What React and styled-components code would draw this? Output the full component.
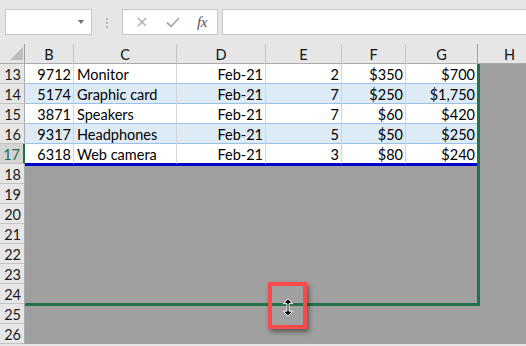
import React from "react";
import styled, { createGlobalStyle, css } from "styled-components";

const COLS = "25px 49px 103px 89px 76px 64px 72px 64px";

const GlobalStyle = createGlobalStyle`
  html, body { margin: 0; padding: 0; background: #e6e6e6; overflow: hidden; }
  body { font-family: Lato, "Liberation Sans", sans-serif; }
  #root { width: 526px; height: 346px; }
`;

const Page = styled.div`
  position: relative;
  width: 526px;
  height: 346px;
  overflow: hidden;
  background: #e6e6e6;
`;

const Toolbar = styled.div`
  display: flex;
  align-items: flex-start;
  box-sizing: border-box;
  height: 44px;
  padding: 9px 0 0 5px;
`;

const NameBox = styled.div`
  box-sizing: border-box;
  width: 87px;
  height: 26px;
  background: #fff;
  border: 1px solid #c6c6c6;
  display: flex;
  align-items: center;
  justify-content: flex-end;
  padding-right: 7px;
`;

const DropArrow = styled.span`
  width: 0;
  height: 0;
  border-left: 3.5px solid transparent;
  border-right: 3.5px solid transparent;
  border-top: 4px solid #6e6e6e;
`;

const Grip = styled.div`
  width: 30px;
  height: 26px;
  display: flex;
  flex-direction: column;
  align-items: center;
  justify-content: center;
  gap: 2px;
  padding-top: 1px;
  box-sizing: border-box;
`;

const GripDot = styled.span`
  width: 2px;
  height: 2px;
  background: #b6b6b6;
`;

const FxBox = styled.div`
  box-sizing: border-box;
  width: 96px;
  height: 26px;
  background: #fff;
  border: 1px solid #c6c6c6;
  display: flex;
  align-items: center;
  padding-left: 14px;
`;

const FxButton = styled.span`
  display: flex;
  align-items: center;
  justify-content: center;
  width: ${(p) => p.$w}px;
`;

const FxLabel = styled.span`
  font-family: "Liberation Serif", "DejaVu Serif", serif;
  font-style: italic;
  font-size: 15px;
  color: #555;
  letter-spacing: -0.5px;
  margin-left: -2px;
`;

const FormulaInput = styled.div`
  box-sizing: border-box;
  flex: 1;
  height: 26px;
  margin-left: 4px;
  margin-right: -4px;
  background: #fff;
  border: 1px solid #c6c6c6;
`;

const Grid = styled.div`
  display: grid;
  grid-template-columns: ${COLS};
  width: 542px;
`;

const HeaderRow = styled(Grid)`
  height: 20px;
  background: #e6e6e6;
`;

const ColHead = styled.div`
  box-sizing: border-box;
  height: 20px;
  border-bottom: 1px solid #ababab;
  border-right: 1px solid ${(p) => (p.$strong ? "#9e9e9e" : "#c4c4c4")};
  display: flex;
  align-items: center;
  justify-content: center;
  font-size: 14.5px;
  color: #111;
  padding-top: 1px;
`;

const Corner = styled(ColHead)`
  justify-content: flex-start;
  align-items: flex-end;
  padding: 0 0 2px 10px;
`;

const Row = styled(Grid)`
  height: 20px;
`;

const RowHead = styled.div`
  box-sizing: border-box;
  height: 20px;
  display: flex;
  align-items: center;
  justify-content: flex-end;
  padding: 1px 3px 0 0;
  font-size: 14.5px;
  background: ${(p) => (p.$active ? "#d3d3d3" : "#e6e6e6")};
  color: ${(p) => (p.$active ? "#1e6b44" : "#1a1a1a")};
  border-bottom: 1px solid #c3c3c3;
  border-right: ${(p) => (p.$active ? "2px solid #217346" : "1px solid #ababab")};
`;

const Cell = styled.div`
  box-sizing: border-box;
  height: 20px;
  display: flex;
  align-items: center;
  justify-content: ${(p) => (p.$left ? "flex-start" : "flex-end")};
  padding: 1px ${(p) => (p.$left ? "0" : "2px")} 0 ${(p) => (p.$left ? "3px" : "0")};
  font-size: 14.5px;
  color: #000;
  white-space: nowrap;
  background: ${(p) => (p.$band ? "#ddebf7" : "#ffffff")};
  border-right: 1px solid #d4d4d4;
  border-bottom: 1px solid #9bc2e6;
  ${(p) =>
    p.$last &&
    css`
      position: relative;
      z-index: 1;
      border-bottom: 1px solid #0000c8;
      box-shadow: 0 2px 0 #0000c8;
    `}
`;

const GrayCell = styled.div`
  background: #a0a0a0;
  grid-column: ${(p) => (p.$span ? "2 / -1" : "auto")};
`;

const Selection = styled.div`
  position: absolute;
  left: 25px;
  top: 64px;
  width: 455px;
  height: 242px;
  box-sizing: border-box;
  border-right: 3px solid #237249;
  border-bottom: 3px solid #237249;
  pointer-events: none;
  z-index: 2;
`;

const Highlight = styled.div`
  position: absolute;
  left: 268px;
  top: 282px;
  width: 39px;
  height: 47px;
  box-sizing: border-box;
  border: 4px solid #f84a4a;
  box-shadow: 2px 3px 5px rgba(0, 0, 0, 0.45);
  z-index: 3;
`;

const Cursor = styled.svg`
  position: absolute;
  left: 282px;
  top: 298px;
  z-index: 4;
`;

const data = [
  [13, "9712", "Monitor", "Feb-21", "2", "$350", "$700"],
  [14, "5174", "Graphic card", "Feb-21", "7", "$250", "$1,750"],
  [15, "3871", "Speakers", "Feb-21", "7", "$60", "$420"],
  [16, "9317", "Headphones", "Feb-21", "5", "$50", "$250"],
  [17, "6318", "Web camera", "Feb-21", "3", "$80", "$240"],
];

const emptyRows = [18, 19, 20, 21, 22, 23, 24, 25, 26];

export default function App() {
  return (
    <Page>
      <GlobalStyle />
      <Toolbar>
        <NameBox>
          <DropArrow />
        </NameBox>
        <Grip>
          <GripDot />
          <GripDot />
          <GripDot />
        </Grip>
        <FxBox>
          <FxButton $w={10}>
            <svg width="10" height="10" viewBox="0 0 10 10">
              <path d="M1 1 L9 9 M9 1 L1 9" stroke="#a9a9a9" strokeWidth="1.3" fill="none" />
            </svg>
          </FxButton>
          <FxButton $w={52}>
            <svg width="14" height="11" viewBox="0 0 14 11">
              <path d="M1 5.5 L5 9.5 L13 1" stroke="#a9a9a9" strokeWidth="1.8" fill="none" />
            </svg>
          </FxButton>
          <FxLabel>fx</FxLabel>
        </FxBox>
        <FormulaInput />
      </Toolbar>

      <HeaderRow>
        <Corner $strong>
          <svg width="14" height="14" viewBox="0 0 14 14">
            <polygon points="13,0 13,13 0,13" fill="#bdbdbd" />
          </svg>
        </Corner>
        {["B", "C", "D", "E", "F", "G", "H"].map((c) => (
          <ColHead key={c} $strong={c === "G"}>
            {c}
          </ColHead>
        ))}
      </HeaderRow>

      {data.map(([n, ...vals]) => {
        const band = n % 2 === 0;
        const last = n === 17;
        return (
          <Row key={n}>
            <RowHead $active={last}>{n}</RowHead>
            {vals.map((v, i) => (
              <Cell key={i} $left={i === 1} $band={band} $last={last}>
                {v}
              </Cell>
            ))}
            <GrayCell />
          </Row>
        );
      })}

      {emptyRows.map((n) => (
        <Row key={n}>
          <RowHead>{n}</RowHead>
          <GrayCell $span />
        </Row>
      ))}

      <Selection />
      <Highlight />
      <Cursor width="12" height="19" viewBox="0 0 12 19">
        <path
          d="M6 0.8 L10.6 5.6 L7 5.6 L7 13.2 L10.6 13.2 L6 18 L1.4 13.2 L5 13.2 L5 5.6 L1.4 5.6 Z"
          fill="#000"
          stroke="#fff"
          strokeWidth="1"
          strokeLinejoin="miter"
        />
      </Cursor>
    </Page>
  );
}
